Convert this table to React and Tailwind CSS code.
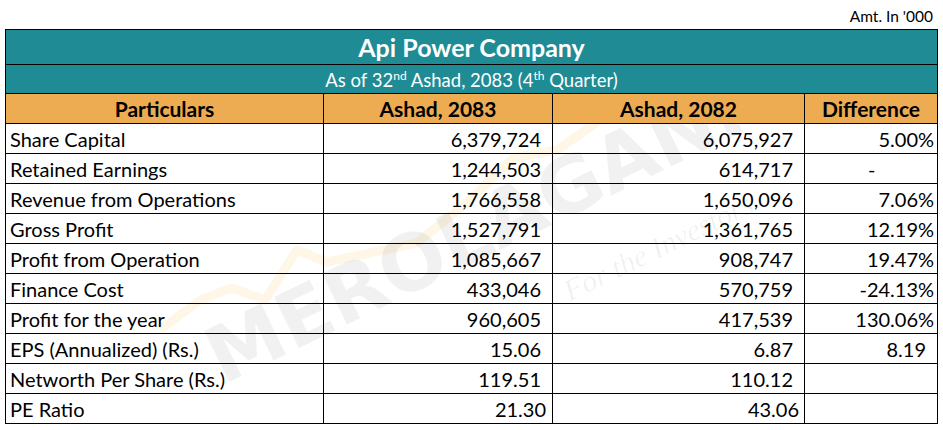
import React from "react";

const rows = [
  ["Share Capital", "6,379,724", "6,075,927", "5.00%"],
  ["Retained Earnings", "1,244,503", "614,717", "-"],
  ["Revenue from Operations", "1,766,558", "1,650,096", "7.06%"],
  ["Gross Profit", "1,527,791", "1,361,765", "12.19%"],
  ["Profit from Operation", "1,085,667", "908,747", "19.47%"],
  ["Finance Cost", "433,046", "570,759", "-24.13%"],
  ["Profit for the year", "960,605", "417,539", "130.06%"],
  ["EPS (Annualized) (Rs.)", "15.06", "6.87", "8.19"],
  ["Networth Per Share (Rs.)", "119.51", "110.12", ""],
  ["PE Ratio", "21.30", "43.06", ""],
];

export default function App() {
  return (
    <div
      className="relative w-[943px] h-[430px] bg-white overflow-hidden text-black"
      style={{ fontFamily: "Lato, 'Open Sans', sans-serif" }}
    >
      {/* watermark */}
      <div className="pointer-events-none absolute inset-0 z-10">
        <svg width="943" height="430" className="absolute left-0 top-0">
          <polyline
            points="160,330 200,300 232,288 265,300 297,250 327,262 417,243 470,200 513,158 557,150 600,120"
            fill="none"
            stroke="#f7b733"
            strokeOpacity="0.12"
            strokeWidth="9"
            strokeLinejoin="round"
          />
          <polygon points="645,70 700,100 668,112" fill="#1e8b95" fillOpacity="0.12" />
        </svg>
        <div
          className="absolute left-[228px] top-[318px] text-[78px] font-bold leading-none text-black/[0.055] origin-bottom-left -rotate-[26deg]"
          style={{ fontFamily: "'DejaVu Sans', sans-serif" }}
        >
          MEROLAGANI
        </div>
        <div
          className="absolute left-[572px] top-[276px] text-[30px] italic leading-none text-black/[0.06] origin-bottom-left -rotate-[26deg]"
          style={{ fontFamily: "'Liberation Serif', serif" }}
        >
          For the Investors
        </div>
      </div>

      <div className="relative z-20">
        <div className="h-[29px] flex items-end justify-end pr-[10px] pb-[5px] text-[15.5px] leading-none">
          Amt. In '000
        </div>
        <div className="ml-[5px] w-[932px]">
          <table className="border-collapse table-fixed w-[932px]">
            <colgroup>
              <col className="w-[318px]" />
              <col className="w-[229px]" />
              <col className="w-[252px]" />
              <col className="w-[133px]" />
            </colgroup>
            <tbody>
              <tr className="h-[35px] bg-[#1e8b95]">
                <td colSpan={4} className="border border-black text-center text-white font-bold text-[25px] leading-none p-0">
                  Api Power Company
                </td>
              </tr>
              <tr className="h-[29px] bg-[#1e8b95]">
                <td colSpan={4} className="border border-black text-center text-white text-[18.5px] leading-none p-0 pt-[2px]">
                  As of 32<sup className="text-[12px] relative -top-[7px]">nd</sup> Ashad, 2083 (4<sup className="text-[12px] relative -top-[7px]">th</sup> Quarter)
                </td>
              </tr>
              <tr className="h-[30px] bg-[#edab52] font-bold text-[21px]">
                <td className="border border-black text-center p-0 leading-none">Particulars</td>
                <td className="border border-black text-center p-0 leading-none">Ashad, 2083</td>
                <td className="border border-black text-center p-0 leading-none">Ashad, 2082</td>
                <td className="border border-black text-center p-0 leading-none">Difference</td>
              </tr>
              {rows.map((r, i) => {
                const last = i === rows.length - 1;
                return (
                  <tr key={i} className="h-[30px] text-[20px]">
                    <td className="border border-black pl-[4px] p-0 leading-none">{r[0]}</td>
                    <td className={`border border-black text-right p-0 leading-none ${last ? "pr-[6px]" : "pr-[11px]"}`}>{r[1]}</td>
                    <td className={`border border-black text-right p-0 leading-none ${last ? "pr-[5px]" : "pr-[11px]"}`}>{r[2]}</td>
                    <td
                      className={`border border-black p-0 leading-none ${
                        r[3] === "-" ? "text-left pl-[63px]" : r[3] === "8.19" ? "text-right pr-[11px]" : "text-right pr-[3px]"
                      }`}
                    >
                      {r[3]}
                    </td>
                  </tr>
                );
              })}
            </tbody>
          </table>
        </div>
      </div>
    </div>
  );
}
